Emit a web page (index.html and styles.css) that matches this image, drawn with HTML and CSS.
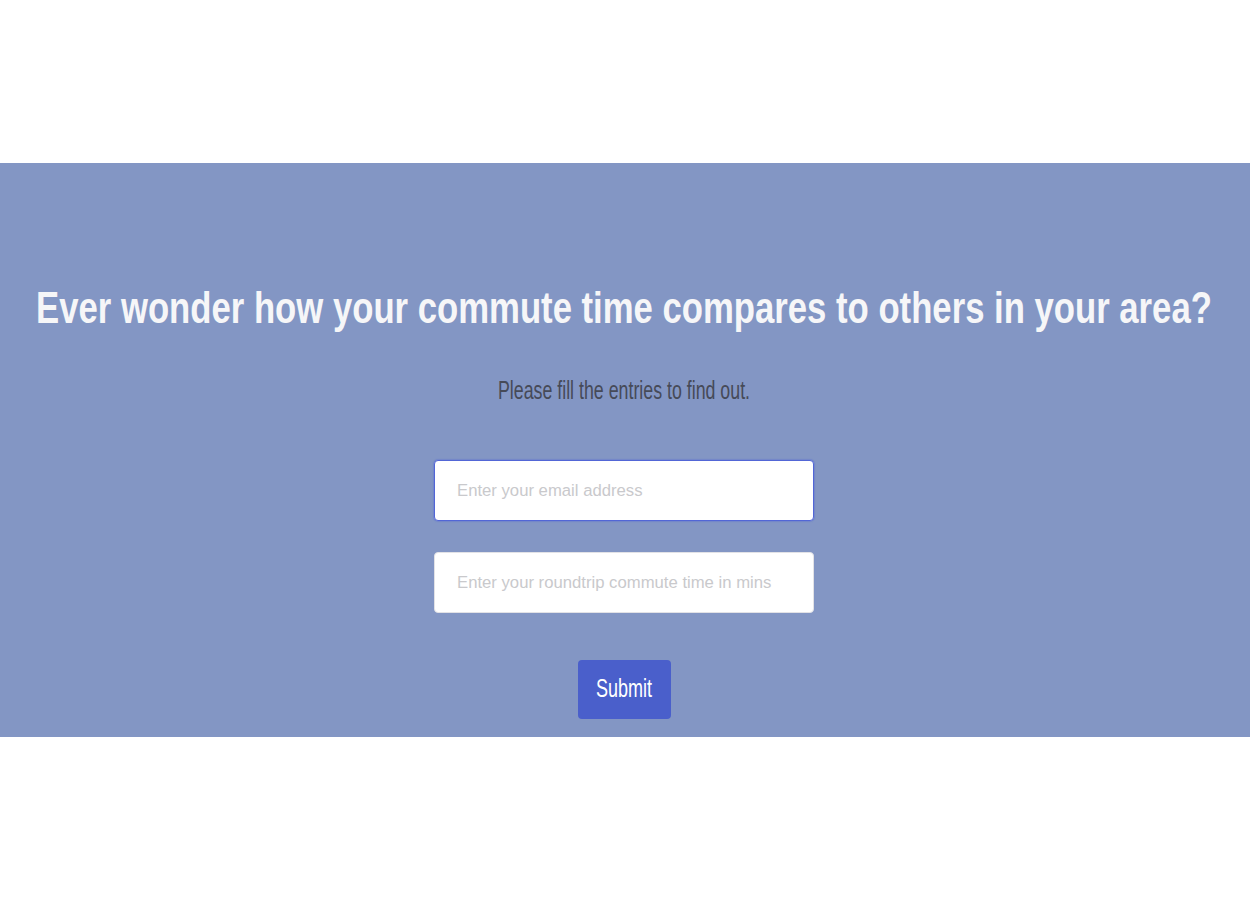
FILE: index.html
```html
<!DOCTYPE html>
<html lang="en">
<head>
<meta charset="utf-8">
<title>Commute comparison</title>
<link rel="stylesheet" href="styles.css">
</head>
<body>
<section class="hero">
  <h1 class="title"><span class="stretch stretch-title">Ever wonder how your commute time compares to others in your area?</span></h1>
  <p class="lead"><span class="stretch stretch-lead">Please fill the entries to find out.</span></p>
  <form class="form">
    <input class="field field-focus" type="email" placeholder="Enter your email address">
    <input class="field" type="text" placeholder="Enter your roundtrip commute time in mins">
    <button class="submit" type="button"><span class="stretch stretch-btn">Submit</span></button>
  </form>
</section>
</body>
</html>
```
FILE: styles.css
```css
html, body {
  margin: 0;
  padding: 0;
  background: #ffffff;
}
body {
  font-family: "Liberation Sans", Arial, sans-serif;
  padding-top: 163px;
  height: 901px;
  box-sizing: border-box;
}
.hero {
  background: #8396c4;
  margin-right: 1px;
  height: 574px;
  box-sizing: border-box;
  padding: 125px 2px 0 0;
  display: flex;
  flex-direction: column;
  align-items: center;
}
.stretch {
  display: inline-block;
}
.title {
  margin: 0;
  font-size: 34.7px;
  line-height: 40px;
  font-weight: 700;
  color: #f6f6f8;
  white-space: nowrap;
  text-align: center;
}
.stretch-title {
  transform: scaleY(1.29);
}
.lead {
  margin: 50px 0 0;
  font-size: 17.8px;
  line-height: 24px;
  color: #464a58;
}
.stretch-lead {
  transform: scaleY(1.42);
}
.form {
  margin-top: 58px;
  display: flex;
  flex-direction: column;
  align-items: center;
}
.field {
  width: 380px;
  height: 61px;
  box-sizing: border-box;
  border: 1px solid #e2e2e6;
  border-radius: 4px;
  background: #ffffff;
  padding: 0 22px;
  font-family: "Liberation Sans", Arial, sans-serif;
  font-size: 16.7px;
  color: #333;
  outline: none;
  margin: 0 0 31px;
}
.field::placeholder {
  color: #c9c9cc;
}
.field-focus {
  border: 1px solid #5266d6;
  box-shadow: 0 0 1px 1px rgba(82, 102, 214, 0.35);
}
.submit {
  margin-top: 16px;
  width: 93px;
  height: 59px;
  border: none;
  border-radius: 4px;
  background: #4a5fcb;
  color: #ffffff;
  font-family: "Liberation Sans", Arial, sans-serif;
  font-size: 18px;
  padding: 0;
  cursor: pointer;
}
.stretch-btn {
  transform: scaleY(1.4);
}
```
